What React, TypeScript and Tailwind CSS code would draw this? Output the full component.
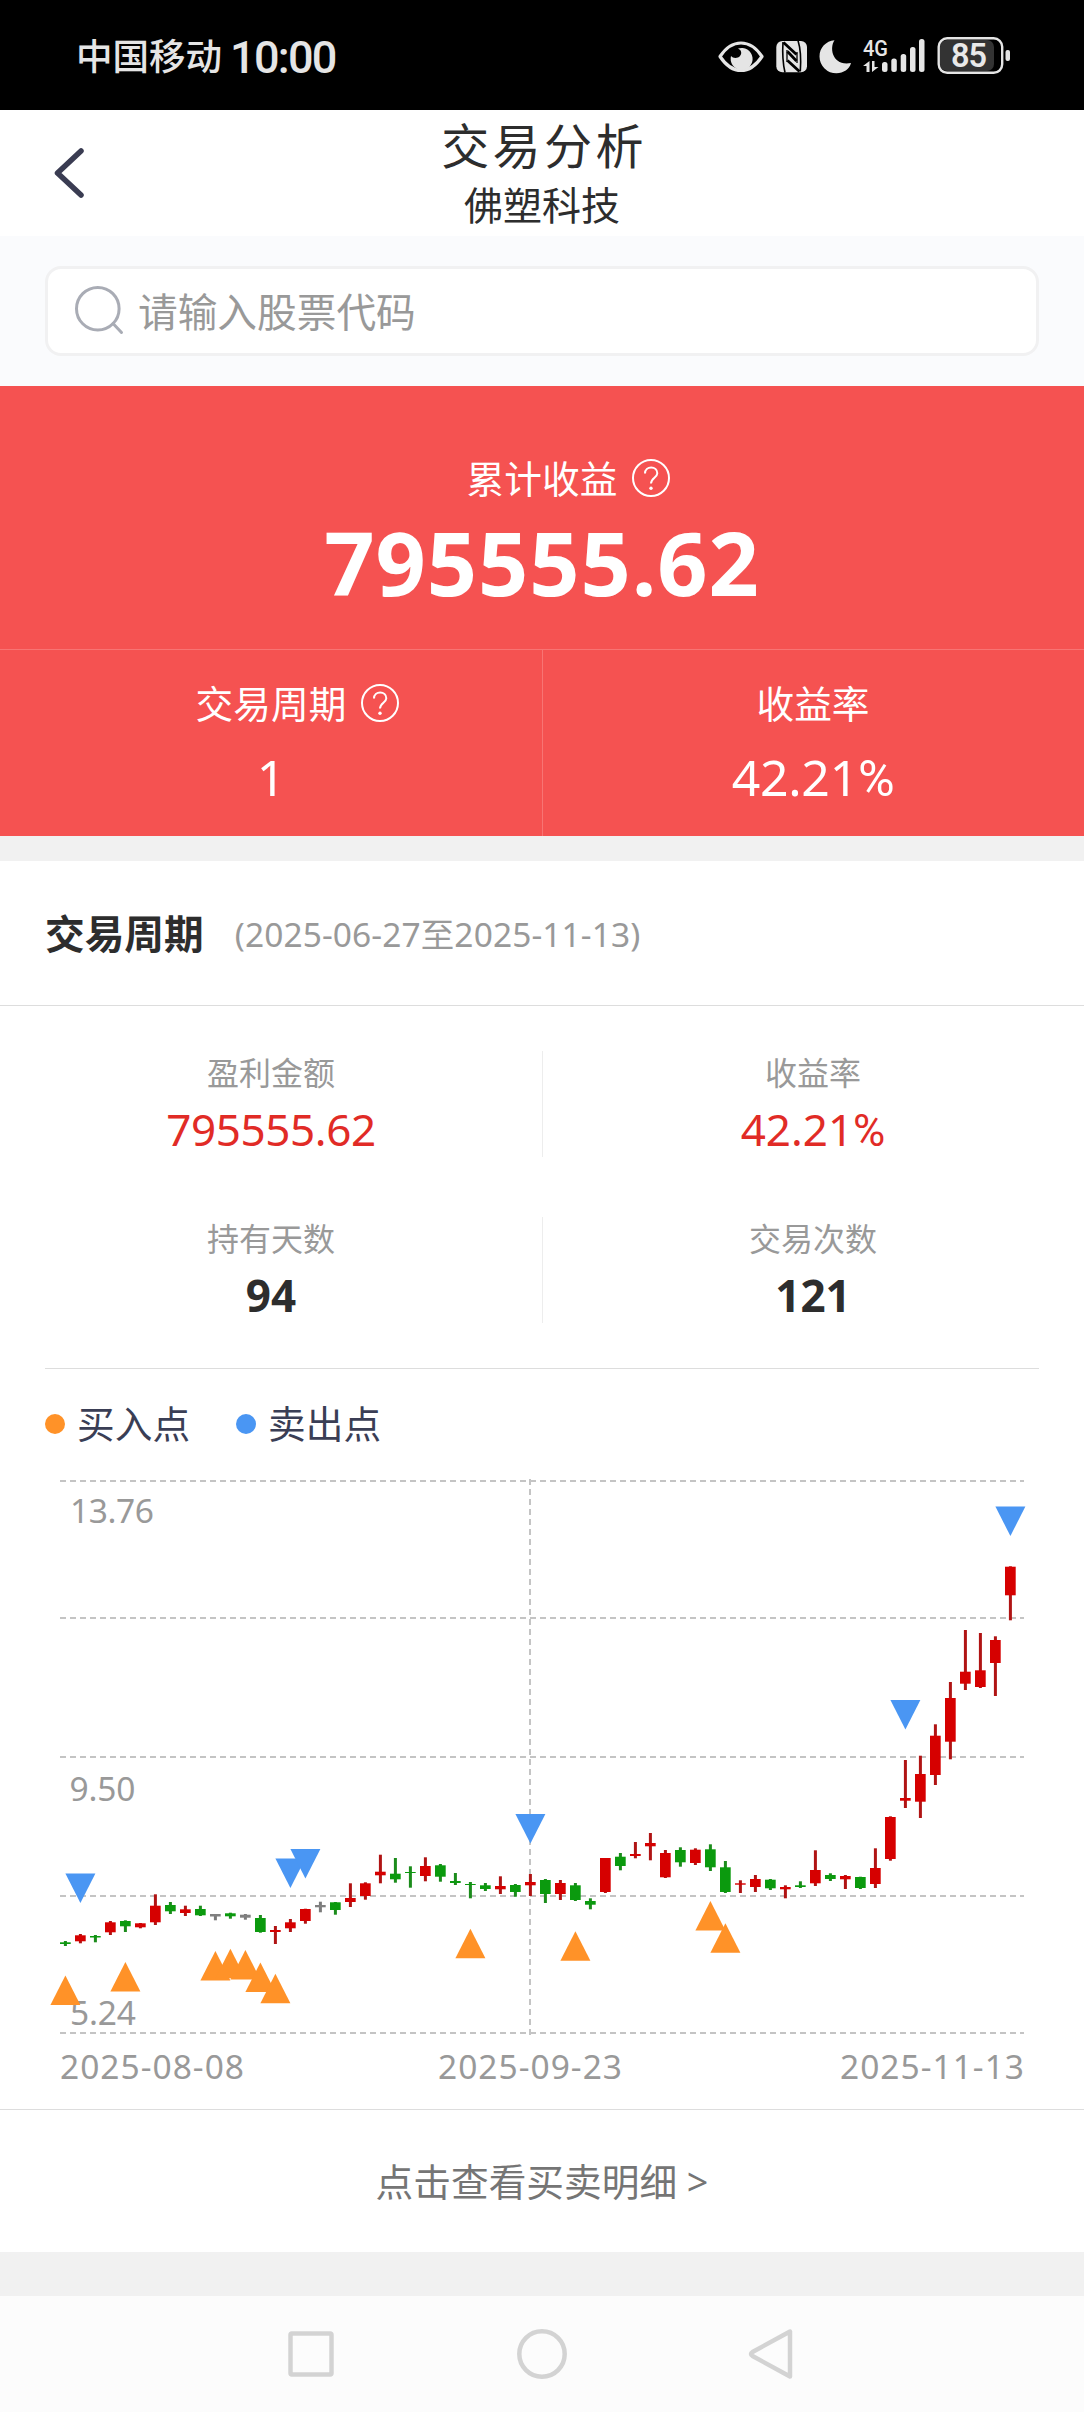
import type { ReactNode } from 'react';

type Tone = 'up' | 'down' | 'flat';
type Candle = [high: number, top: number, bottom: number, low: number, tone: Tone];

const TONES: Record<Tone, { body: string; wick: string }> = {
  up: { body: '#d60000', wick: '#b01414' },
  down: { body: '#0b9a0e', wick: '#1c8c1c' },
  flat: { body: '#808080', wick: '#7a7a7a' },
};

const CANDLES: Candle[] = [
  [1941, 1942.3, 1944, 1946, 'down'],
  [1934, 1935.3, 1941.3, 1943.3, 'up'],
  [1935, 1936, 1937.5, 1942.3, 'down'],
  [1921, 1922.3, 1932.3, 1935, 'up'],
  [1920.3, 1921, 1926.3, 1932, 'down'],
  [1923, 1923.3, 1927.3, 1928.3, 'up'],
  [1894.3, 1905.7, 1922.3, 1925, 'up'],
  [1902, 1905, 1911.3, 1914, 'down'],
  [1905.7, 1909.3, 1913, 1916, 'up'],
  [1905.7, 1909, 1915.3, 1916, 'down'],
  [1914, 1914, 1916.5, 1920.3, 'flat'],
  [1912.7, 1913.3, 1916.3, 1918.7, 'down'],
  [1914, 1914.7, 1917.7, 1919.7, 'flat'],
  [1915, 1918, 1932, 1932.7, 'down'],
  [1926, 1930, 1932, 1944, 'up'],
  [1919, 1922.3, 1928.3, 1932, 'up'],
  [1908.7, 1909, 1921, 1923.7, 'up'],
  [1901.7, 1905, 1907.3, 1912.3, 'flat'],
  [1902, 1902.3, 1910, 1914.7, 'down'],
  [1883.3, 1898, 1902, 1907, 'up'],
  [1882.3, 1883.3, 1896, 1899.7, 'up'],
  [1854.7, 1871.7, 1875.3, 1883.3, 'up'],
  [1858, 1873.7, 1879.3, 1882.7, 'down'],
  [1866.3, 1872, 1873, 1887.7, 'down'],
  [1857.3, 1866, 1876, 1881.3, 'up'],
  [1864, 1865.3, 1876.7, 1881.7, 'down'],
  [1873, 1881, 1883, 1885, 'down'],
  [1882, 1884, 1885, 1898.3, 'down'],
  [1883, 1885.3, 1889, 1891, 'down'],
  [1876.3, 1886, 1889.3, 1894, 'up'],
  [1884, 1885, 1892, 1896.7, 'down'],
  [1874, 1882, 1885.3, 1896, 'up'],
  [1879, 1880, 1894, 1903, 'down'],
  [1880, 1883, 1894, 1900, 'up'],
  [1883, 1885.3, 1900, 1901, 'down'],
  [1898.3, 1901, 1904.7, 1909.3, 'down'],
  [1858, 1858, 1892, 1893, 'up'],
  [1853, 1856.7, 1866, 1870.3, 'down'],
  [1842, 1854, 1856, 1858.3, 'up'],
  [1833, 1843, 1846.3, 1860.3, 'up'],
  [1850, 1853, 1877.3, 1878, 'up'],
  [1847.3, 1850, 1862.3, 1866.7, 'down'],
  [1848.3, 1849.7, 1863, 1865, 'up'],
  [1844.3, 1849.3, 1867.3, 1871, 'down'],
  [1861, 1867.3, 1892, 1893, 'down'],
  [1880.3, 1883.3, 1884.7, 1893, 'up'],
  [1875, 1879, 1887, 1892, 'up'],
  [1879, 1879.7, 1888.3, 1890, 'down'],
  [1885.3, 1887, 1889.3, 1898.3, 'up'],
  [1881.3, 1885.3, 1887, 1888, 'down'],
  [1850.3, 1870, 1883.3, 1886, 'up'],
  [1873.3, 1875, 1879, 1881, 'down'],
  [1875, 1876, 1879.3, 1889, 'up'],
  [1876.7, 1877, 1888, 1889, 'down'],
  [1848.3, 1868, 1884, 1888, 'up'],
  [1816.3, 1817, 1859, 1860.7, 'up'],
  [1760, 1798, 1800.7, 1808, 'up'],
  [1755.7, 1774, 1801.7, 1818, 'up'],
  [1724.3, 1735.7, 1775, 1785, 'up'],
  [1682, 1698, 1741.7, 1759.3, 'up'],
  [1630, 1671.7, 1683.7, 1690, 'up'],
  [1633, 1670.3, 1687, 1688, 'up'],
  [1636.3, 1640, 1663, 1696, 'up'],
  [1566.3, 1566.7, 1595.3, 1620.3, 'up'],
];

/** [candle index, y of the marker's upper edge] */
const SELLS: [number, number][] = [
  [1, 1873.5],
  [15, 1858.5],
  [16, 1849],
  [31, 1814],
  [56, 1700],
  [63, 1506.5],
];
const BUYS: [number, number][] = [
  [0, 1975.5],
  [4, 1962],
  [10, 1951],
  [11, 1948.7],
  [12, 1950],
  [13, 1962.5],
  [14, 1973.7],
  [27, 1928.7],
  [34, 1931.3],
  [43, 1901],
  [44, 1923.3],
];

const candleX = (i: number) => 65.4 + 15 * i;

function Chart() {
  return (
    <svg className="block" width="1084" height="639" viewBox="0 1470 1084 639">
      <g stroke="#c4c4c4" strokeWidth="2" strokeDasharray="6 4">
        {[1481, 1618, 1757, 1896, 2033].map((y) => (
          <line key={y} x1="60" x2="1024" y1={y} y2={y} />
        ))}
        <line x1="530" x2="530" y1="1479" y2="2035" />
      </g>
      <g fill="#999999" fontSize="33.5">
        <text x="70" y="1523" textLength="84">13.76</text>
        <text x="69.500" y="1801" textLength="66">9.50</text>
        <text x="70" y="2025" textLength="66">5.24</text>
        <text x="60" y="2079" textLength="184">2025-08-08</text>
        <text x="438" y="2079" textLength="184">2025-09-23</text>
        <text x="840" y="2079" textLength="184">2025-11-13</text>
      </g>
      {CANDLES.map(([high, top, bottom, low, tone], i) => (
        <g key={i}>
          <rect x={candleX(i) - 1.5} y={high} width="3" height={low - high} fill={TONES[tone].wick} />
          <rect x={candleX(i) - 5.4} y={top} width="10.7" height={bottom - top} fill={TONES[tone].body} />
        </g>
      ))}
      {BUYS.map(([i, y]) => (
        <path key={i} d={`M${candleX(i)} ${y}l15 29.500h-30z`} fill="#ff9228" />
      ))}
      {SELLS.map(([i, y]) => (
        <path key={i} d={`M${candleX(i)} ${y + 29.5}l15 -29.500h-30z`} fill="#4a96f3" />
      ))}
    </svg>
  );
}

function StatusIcons() {
  return (
    <svg className="block" width="296" height="40" viewBox="716 36 296 40">
      <g fill="#e5e5e5">
        <path d="M720 56.500C726 47.500 733 43 741 43S756 47.500 762 56.500C756 65.500 749 70.500 741 70.500S726 65.500 720 56.500Z" fill="none" stroke="#e5e5e5" strokeWidth="3.2" strokeLinejoin="round" />
        <path d="M738 48.500a11 11 0 1 1-7 7.500c2 2.500 6.500 2.800 9 0 2.200-2.500 1.500-6-2-7.500Z" />
        <rect x="776.300" y="41" width="30.700" height="31.300" rx="6" />
        <g stroke="#000" fill="none">
          <path d="M783 42C782.500 50 782.500 62 785 72.500M798 40.500C801 50 801 62 800.300 71.500" strokeWidth="1.600" />
          <path d="M783.500 42.500L796.500 54.500M787.500 51.500L796.500 61M787.500 60.500L799.500 71.500" strokeWidth="2.800" />
          <path d="M787 50V62M797 52V63" strokeWidth="1.300" />
        </g>
        <path d="M834.500 40.200C829 48 832.500 66.500 851 63C849.500 69 843.500 73.300 836.500 73.300A17 17 0 0 1 819.500 56.500C819.500 47.500 826 41 834.500 40.200Z" />
        <rect x="882" y="62" width="5.500" height="10" rx="2.500" />
        <rect x="891.300" y="58.500" width="5.500" height="13.500" rx="2.500" />
        <rect x="900.700" y="54" width="5.500" height="18" rx="2.500" />
        <rect x="910" y="47" width="5.500" height="25" rx="2.500" />
        <rect x="919" y="39" width="5.500" height="33" rx="2.500" />
        <path d="M863 66L869.500 61V72H866.500V66ZM872 61h2.500v6h4L872 72Z" />
        <rect x="1005.500" y="50" width="4.500" height="11" rx="2" />
        <text x="863" y="55.500" fontSize="22" fontWeight="500" textLength="25" lengthAdjust="spacingAndGlyphs" fontFamily="Roboto">4G</text>
      </g>
      <rect x="940" y="40" width="54" height="31" rx="7" fill="#333333" />
      <rect x="938.700" y="38.300" width="63.500" height="34.500" rx="8.500" fill="none" stroke="#e5e5e5" strokeWidth="2.400" />
      <text x="951" y="67" fontSize="32.500" fontWeight="600" fill="#e9e9e9" textLength="36" fontFamily="Roboto">85</text>
    </svg>
  );
}

function Help() {
  return (
    <svg className="absolute left-full top-0 ml-[13.5px]" width="40" height="40" viewBox="0 0 40 40" fill="none" stroke="#fff" strokeWidth="2">
      <circle cx="20" cy="19" r="18" />
      <path d="M14 14.500C14 10.500 17 8.500 20.200 8.500S26.300 10.700 26.300 14.200C26.300 18.500 20 19 20 24.500" />
      <circle cx="20" cy="29.300" r="1.700" fill="#fff" stroke="none" />
    </svg>
  );
}

function HeroLabel({ children, help }: { children: ReactNode; help?: boolean }) {
  return (
    <div className="relative h-10 text-[37.7px] leading-[40px] text-white">
      {children}
      {help && <Help />}
    </div>
  );
}

function Percent({ value }: { value: string }) {
  return (
    <>
      {value}
      <span className="font-['Roboto']">%</span>
    </>
  );
}

function Stat({ label, value, className }: { label: string; value: ReactNode; className: string }) {
  return (
    <div className="flex h-[106px] flex-col items-center">
      <div className="mt-[2px] text-[32px] leading-[40px] text-[#999999]">{label}</div>
      <div className={className}>{value}</div>
    </div>
  );
}

function LegendItem({ color, label }: { color: string; label: string }) {
  return (
    <div className="flex items-center gap-[12px]">
      <span className={color} />
      <span className="text-[37.7px] leading-[40px] text-[#3a3e55]">{label}</span>
    </div>
  );
}

export default function App() {
  return (
    <div className="flex h-[2412px] w-[1084px] flex-col overflow-hidden bg-white font-['Noto_Sans','Noto_Sans_CJK_SC',sans-serif]">
      <div className="flex h-[110px] shrink-0 items-start justify-between bg-black pl-[76px] pr-[72px]">
        <div className="flex pt-[31px] text-[#e5e5e5]">
          <span className="text-[36.5px] font-medium leading-[50px]">中国移动</span>
          <span className="ml-[8px] pt-[2px] font-['Roboto'] text-[45px] font-medium leading-[50px] tracking-[-1.7px]">10:00</span>
        </div>
        <div className="pt-[36px]">
          <StatusIcons />
        </div>
      </div>

      <header className="relative flex h-[126px] shrink-0 flex-col items-center text-[#2d2d2d]">
        <svg className="absolute left-[51px] top-[36px]" width="34" height="54" viewBox="0 0 34 54" fill="none" stroke="#3a3c52" strokeWidth="5.500" strokeLinecap="round" strokeLinejoin="round">
          <path d="M30 5L6.500 27L30 49" />
        </svg>
        <h1 className="mt-[6px] pl-[4px] text-[48px] leading-[60px] tracking-[3.4px]">交易分析</h1>
        <div className="mt-[4px] text-[39px] leading-[50px]">佛塑科技</div>
      </header>

      <div className="h-[150px] shrink-0 bg-[#fafbfd] px-[45px] pt-[30px]">
        <div className="flex h-[90px] items-center rounded-[16px] border-[3px] border-[#f1f1f2] bg-white pl-[24px]">
          <svg width="54" height="54" viewBox="0 0 54 54" fill="none" stroke="#a9acb5" strokeWidth="3">
            <circle cx="25.800" cy="24.700" r="21.300" />
            <path d="M41 39.500L49.500 48.500" strokeLinecap="round" />
          </svg>
          <span className="ml-[12px] pt-[1px] text-[39.7px] leading-[50px] text-[#999999]">请输入股票代码</span>
        </div>
      </div>

      <section className="h-[450px] shrink-0 bg-[#f55251] text-white">
        <div className="flex h-[263px] flex-col items-center pt-[73px]">
          <HeroLabel help>累计收益</HeroLabel>
          <div className="mt-[15px] text-[88px] font-bold leading-[96px] tracking-[0.9px]">795555.62</div>
        </div>
        <div className="grid h-[187px] grid-cols-2 border-t border-[#f87473]">
          <div className="-mr-px flex flex-col items-center border-r border-[#f87473] pt-[34px]">
            <HeroLabel help>交易周期</HeroLabel>
            <div className="mt-[23px] text-[50px] leading-[60px]">1</div>
          </div>
          <div className="flex flex-col items-center pt-[34px]">
            <HeroLabel>收益率</HeroLabel>
            <div className="mt-[23px] text-[50px] leading-[60px] tracking-[-0.3px]">
              <Percent value="42.21" />
            </div>
          </div>
        </div>
      </section>
      <div className="h-[25px] shrink-0 bg-[#f1f1f1]" />

      <section className="flex h-[145px] shrink-0 items-center border-b border-[#dddddd] pl-[45px]">
        <h2 className="pt-[1px] text-[39.700px] font-bold leading-[50px] text-[#2d2d2d]">交易周期</h2>
        <span className="ml-[31px] pt-[1px] text-[33.500px] leading-[50px] tracking-[0.1px] text-[#999999]">(2025-06-27至2025-11-13)</span>
      </section>

      <section className="h-[362px] shrink-0 pt-[45px]">
        <div className="grid grid-cols-2">
          <div className="-mr-px border-r border-[#ededed]">
            <Stat label="盈利金额" value="795555.62" className="mt-[6px] text-[44px] leading-[60px] tracking-[-0.4px] text-[#e12b26]" />
          </div>
          <Stat label="收益率" value={<Percent value="42.21" />} className="mt-[6px] text-[44px] leading-[60px] text-[#e12b26]" />
        </div>
        <div className="mt-[60px] grid grid-cols-2">
          <div className="-mr-px border-r border-[#ededed]">
            <Stat label="持有天数" value="94" className="mt-[6px] text-[44px] font-bold leading-[60px] text-[#2d2d2d]" />
          </div>
          <Stat label="交易次数" value="121" className="mt-[6px] text-[44px] font-bold leading-[60px] text-[#2d2d2d]" />
        </div>
      </section>

      <div className="mx-[45px] flex h-[102px] shrink-0 items-start gap-[46px] border-t border-[#dddddd] pt-[35px]">
        <LegendItem color="size-[20px] rounded-full bg-[#ff9228]" label="买入点" />
        <LegendItem color="size-[20px] rounded-full bg-[#4a96f3]" label="卖出点" />
      </div>
      <div className="h-[639px] shrink-0">
        <Chart />
      </div>

      <div className="flex h-[143px] shrink-0 items-center justify-center border-t border-[#dddddd] pt-[1px] text-[37.700px] leading-[50px] text-[#757575]">
        点击查看买卖明细 &gt;
      </div>
      <div className="h-[44px] shrink-0 bg-[#f1f1f1]" />

      <nav className="h-[116px] shrink-0 bg-[#fcfcfc]">
        <svg className="mx-auto block" width="508" height="116" viewBox="288 2296 508 116" fill="none" stroke="#d3d3d3" strokeWidth="4.500" strokeLinejoin="round">
          <rect x="290.500" y="2333.500" width="41" height="41" rx="1.500" />
          <circle cx="542" cy="2354" r="22.700" />
          <path d="M790 2331.500V2376.500L752.500 2356Q749.500 2354 752.500 2352Z" />
        </svg>
      </nav>
    </div>
  );
}
